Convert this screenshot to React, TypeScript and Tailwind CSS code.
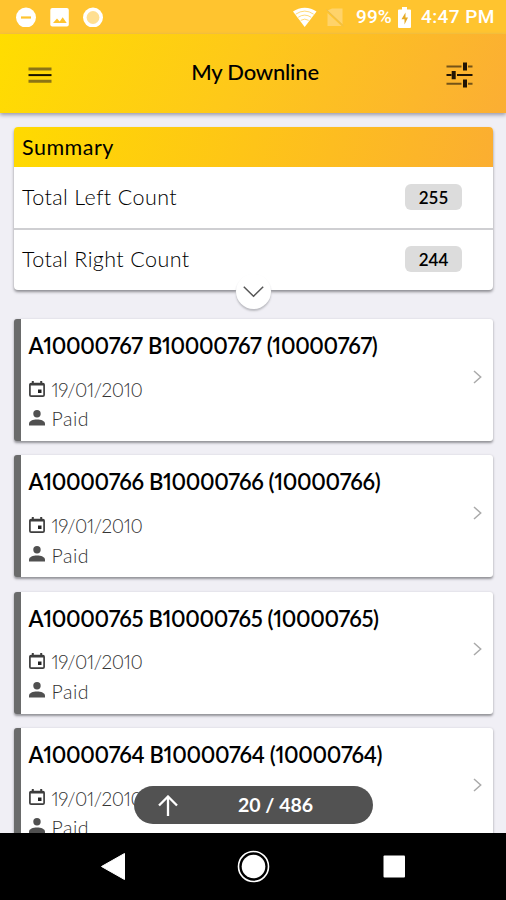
import React from "react";

const members = ["767", "766", "765", "764"];

function StatusBar() {
  return (
    <div className="flex h-[34px] shrink-0 items-center bg-[#ffc42f] pl-4 pr-[10px] text-white">
      <svg className="h-5 w-[88px] shrink-0" viewBox="0 0 88 20" fill="none">
        <circle cx="10" cy="10.5" r="10" fill="#fff" />
        <path d="M5 10.5h10" stroke="#ffc42f" strokeWidth="2.2" />
        <rect x="34.3" y="1" width="18.5" height="18.5" rx="2" fill="#fff" />
        <path d="M37 16l4-4.5 2.7 3 3-4.2 4 5.7z" fill="#ffc42f" />
        <circle cx="77" cy="10.5" r="10" fill="#fff" />
        <circle cx="77" cy="10.5" r="6.4" fill="#ffdf92" />
      </svg>
      <div className="flex-1" />
      <svg className="h-5 w-[54px] shrink-0" viewBox="0 0 54 20" fill="none">
        <path d="M0 4.6C6.5-.6 17-.6 23.5 4.6L11.700 20z" fill="#fff" />
        <path d="M2.700 7.200q9-6.200 18 0M5.200 10.300q6.500-4.400 13 0M7.700 13.400q4-2.600 8 0" stroke="#ffc42f" strokeWidth="1" opacity=".65" />
        <path d="M39 1.500h10.500v15.700L34.500 3.500zM34.500 6v13h14z" fill="#ffd36a" />
        <path d="M33.500 2.500l17 16.500" stroke="#e9bd50" strokeWidth="1" />
      </svg>
      <span className="ml-[9px] w-[37px] whitespace-nowrap font-[Roboto,sans-serif] text-[19px] font-medium leading-5 tracking-[.1px]">99%</span>
      <svg className="ml-[5px] h-[21px] w-[13px] shrink-0" viewBox="0 0 13 21">
        <path d="M4 0h5v2.500h3q1 0 1 1V20q0 1-1 1H1q-1 0-1-1V3.500q0-1 1-1h3z" fill="#fff" />
        <path d="M7.500 5.500L3.500 12.300h3V17.500l3.500-7H7.500z" fill="#e6aa25" />
      </svg>
      <span className="ml-[10px] w-[75px] whitespace-nowrap font-[Roboto,sans-serif] text-[19px] font-medium leading-5 tracking-[.4px]">4:47 PM</span>
    </div>
  );
}

function Header() {
  return (
    <header className="z-10 flex h-[79px] shrink-0 items-center justify-between bg-[linear-gradient(115deg,#ffdd00_0%,#fec81a_48%,#fbae34_100%)] pl-7 pr-[33px] shadow-[0_2px_4px_#9999aa]">
      <svg className="mt-[3px] h-4 w-6" viewBox="0 0 24 16">
        <path d="M.5 2h23M.5 14.200h23" stroke="#8c7415" strokeWidth="3" />
        <path d="M.5 8.100h23" stroke="#171300" strokeWidth="2" />
      </svg>
      <h1 className="-mt-[3px] ml-3 whitespace-nowrap text-[22px] font-medium leading-7 tracking-[-.2px]">My Downline</h1>
      <svg className="mt-[3px] h-[26px] w-[27px]" viewBox="0 0 27 26" fill="none">
        <path d="M.5 4.500h15M22 4.500h4.500M.5 21.700h15M22 21.700h4.500" stroke="#745317" strokeWidth="2" />
        <path d="M.5 13h5M11 13h15.500" stroke="#201405" strokeWidth="2.200" />
        <path d="M19 .5v8M7.700 9v8.200M19 17.500v8" stroke="#201405" strokeWidth="4" strokeLinecap="butt" />
      </svg>
    </header>
  );
}

function Count({ label, value }: { label: string; value: number }) {
  return (
    <div className="flex h-[61.500px] items-center justify-between pl-2 pr-[31px]">
      <span className="-mt-px whitespace-nowrap text-[21.500px] font-light tracking-[.4px] text-black">{label}</span>
      <span className="flex h-[26px] w-[57px] items-center justify-center rounded-md bg-[#dcdcdc] text-[17px] font-semibold">{value}</span>
    </div>
  );
}

function Summary() {
  return (
    <section className="relative h-[163px] shrink-0 rounded bg-white shadow-[0_2px_3px_#8d8d92]">
      <div className="flex h-[39.500px] items-center rounded-t bg-[linear-gradient(104deg,#ffda00,#fec418_50%,#fbae31)] pl-2 text-[21.500px] tracking-[.5px]">Summary</div>
      <Count label="Total Left Count" value={255} />
      <div className="-mb-px h-[1.500px] bg-[#cfcfd2]" />
      <Count label="Total Right Count" value={244} />
      <div className="absolute -bottom-[19px] left-[222px] flex size-[35px] items-center justify-center rounded-full bg-white shadow-[0_2px_2px_#bcbcc2]">
        <svg className="h-3 w-[21px]" viewBox="0 0 21 12" fill="none"><path d="M.8.8l9.700 9.500L20.200.8" stroke="#555" strokeWidth="1.500" /></svg>
      </div>
    </section>
  );
}

function Member({ suffix }: { suffix: string }) {
  const id = `10000${suffix}`;
  return (
    <article className="flex h-[122px] shrink-0 items-center justify-between rounded-[3px] border-l-[7px] border-[#6a6b6b] bg-white pr-[11px] shadow-[0_1.500px_2.500px_#929297]">
      <div className="h-full pl-[7.500px] pt-[13px]">
        <h2 className="whitespace-nowrap text-[22px] font-semibold proportional-nums leading-7 tracking-[-.32px]">{`A${id} B${id} (${id})`}</h2>
        <div className="mt-[15.500px] flex h-[29px] items-center">
          <svg className="-mt-[3px] h-4 w-4" viewBox="0 0 16 16" fill="none">
            <rect x=".9" y="2.500" width="14.200" height="12.600" rx="1.200" stroke="#3d3d3d" strokeWidth="1.700" />
            <path d="M1 3.600h14M3.800 0v4M12.200 0v4" stroke="#3d3d3d" strokeWidth="2" />
            <path d="M9 8.500h3.500v3.500H9z" fill="#222" />
          </svg>
          <span className="ml-[7px] text-[19px] font-light proportional-nums tracking-[-.4px] text-[#333]">19/01/2010</span>
        </div>
        <div className="flex h-[29px] items-center">
          <svg className="mb-[3px] h-4 w-4" viewBox="0 0 16 16" fill="#505050">
            <circle cx="8" cy="3.700" r="3.700" />
            <path d="M0 15.500v-1.700C0 8.200 16 8.200 16 13.800v1.700z" />
          </svg>
          <span className="ml-[7px] text-[19.500px] font-light tracking-[.5px] text-[#333]">Paid</span>
        </div>
      </div>
      <svg className="mt-[-7px] h-[14px] w-[9px]" viewBox="0 0 9 14" fill="none"><path d="M1 1l6.700 6L1 13" stroke="#aaa" strokeWidth="1.500" /></svg>
    </article>
  );
}

export default function App() {
  return (
    <div className="relative flex h-[900px] w-[506px] flex-col overflow-hidden bg-[#f0eff5] font-[Lato,sans-serif] text-black">
      <StatusBar />
      <Header />
      <main className="flex min-h-0 flex-1 flex-col overflow-hidden pl-[14px] pr-[13px] pt-[14px]">
        <Summary />
        <div className="mt-[29px] flex flex-col gap-[14.300px]">
          {members.map((m) => <Member key={m} suffix={m} />)}
        </div>
      </main>
      <div className="absolute left-[134px] top-[786px] flex h-[38px] w-[239px] items-center rounded-full bg-[#525252] text-white">
        <svg className="ml-6 h-[21px] w-5" viewBox="0 0 20 21" fill="none"><path d="M10 21V2M1 10.500l9-9 9 9" stroke="#fff" strokeWidth="2.300" /></svg>
        <span className="-mt-px ml-[60px] whitespace-nowrap text-[19.500px] font-bold">20 / 486</span>
      </div>
      <nav className="z-10 h-[67px] shrink-0 bg-black">
        <svg className="h-[67px] w-[506px]" viewBox="0 0 506 67" fill="#fff">
          <path d="M101.500 33.500L124.500 20.500v26z" stroke="#fff" strokeWidth="1" strokeLinejoin="round" />
          <circle cx="253.500" cy="33.500" r="15" fill="none" stroke="#fff" strokeWidth="1.600" />
          <circle cx="253.500" cy="33.500" r="11.800" />
          <rect x="383.500" y="22.500" width="21.500" height="22" rx="1" />
        </svg>
      </nav>
    </div>
  );
}
